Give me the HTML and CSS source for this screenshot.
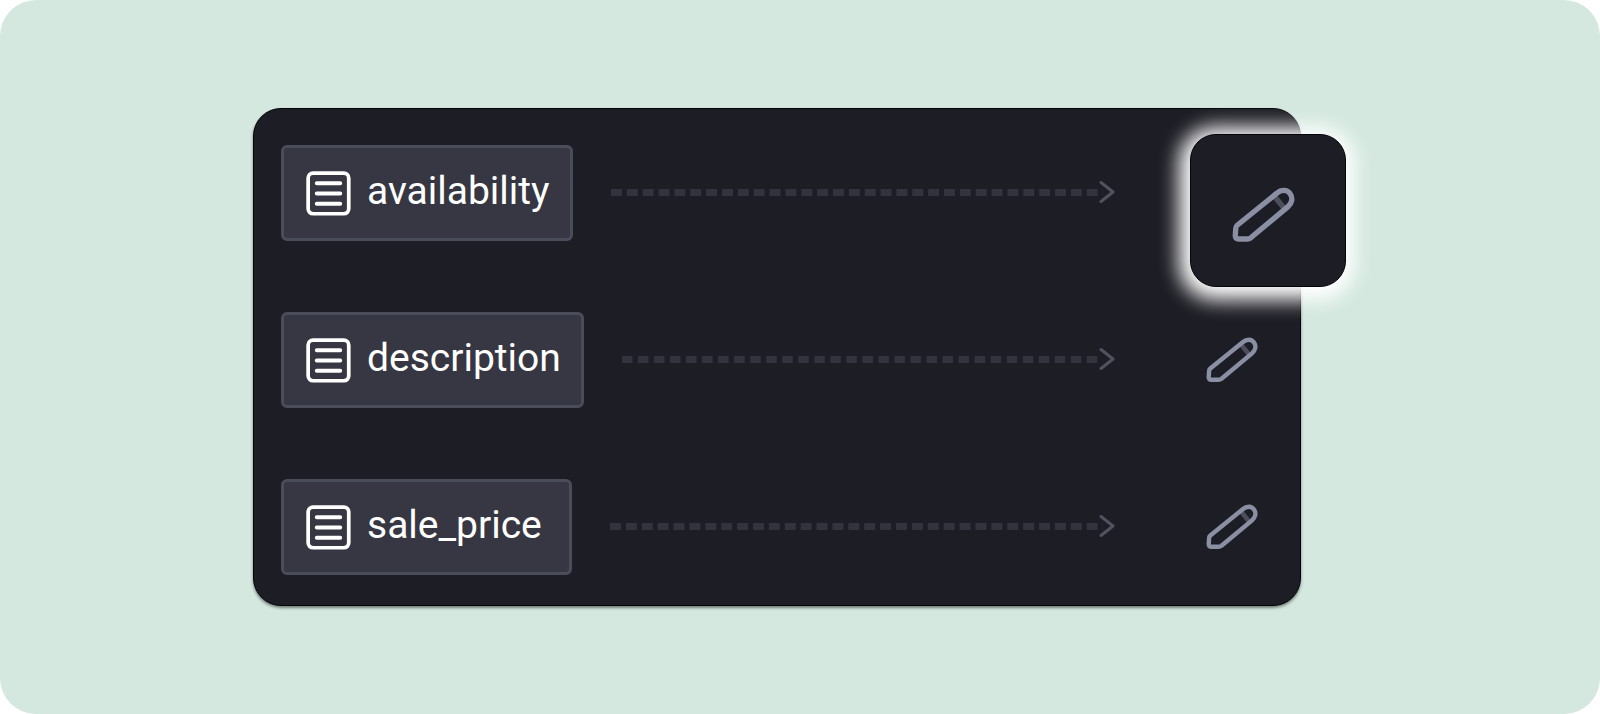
FILE: index.html
```html
<!DOCTYPE html>
<html lang="en">
<head>
    <meta charset="UTF-8">
    <meta name="viewport" content="width=device-width, initial-scale=1.0">
    <title>Field Mapping</title>
    <link rel="stylesheet" href="styles.css">
</head>
<body>
    <!-- Shared icons -->
    <svg class="sprite" aria-hidden="true">
        <symbol id="icon-field" viewBox="0 0 46 46">
            <rect x="2.200" y="2.200" width="41.500" height="41.500" rx="5" fill="none" stroke="#fff" stroke-width="3.800"/>
            <path d="M11 12.500h24M11 23h24M11 33.500h24" stroke="#fff" stroke-width="4" stroke-linecap="round"/>
        </symbol>
        <symbol id="icon-pencil" viewBox="0 0 52 46">
            <path d="M35 7.500l8.500 10.500" fill="none" stroke="#4c4e5b" stroke-width="4.500"/>
            <path d="M4.300 31.500L37 5C40.500 2 45.500 1.800 48 5.500C50.500 9.200 49.500 13.300 46 16.300L15.500 41.800Q14.200 42.800 12.500 42.800H5.500Q2.700 42.800 2.700 40L3.100 34Q3.200 32.400 4.300 31.500Z" fill="none" stroke="#8b8fa3" stroke-width="4.400" stroke-linejoin="round"/>
        </symbol>
        <symbol id="icon-arrow" viewBox="0 0 16 24">
            <path d="M2 2.500L14 12L2 21.500" fill="none" stroke="#51525e" stroke-width="3" stroke-linecap="round" stroke-linejoin="round"/>
        </symbol>
    </svg>

    <main class="stage">
        <div class="card">
            <div class="row">
                <div class="chip">
                    <svg class="field-icon" aria-hidden="true"><use href="#icon-field"/></svg>
                    <span>availability</span>
                </div>
                <div class="connector">
                    <div class="dashes"></div>
                    <svg class="arrow" aria-hidden="true"><use href="#icon-arrow"/></svg>
                </div>
                <div class="slot">
                    <button class="edit edit-active" aria-label="Edit availability">
                        <svg class="pencil" aria-hidden="true"><use href="#icon-pencil"/></svg>
                    </button>
                </div>
            </div>
            <div class="row">
                <div class="chip">
                    <svg class="field-icon" aria-hidden="true"><use href="#icon-field"/></svg>
                    <span>description</span>
                </div>
                <div class="connector">
                    <div class="dashes"></div>
                    <svg class="arrow" aria-hidden="true"><use href="#icon-arrow"/></svg>
                </div>
                <div class="slot">
                    <button class="edit" aria-label="Edit description">
                        <svg class="pencil" aria-hidden="true"><use href="#icon-pencil"/></svg>
                    </button>
                </div>
            </div>
            <div class="row">
                <div class="chip">
                    <svg class="field-icon" aria-hidden="true"><use href="#icon-field"/></svg>
                    <span>sale_price</span>
                </div>
                <div class="connector">
                    <div class="dashes"></div>
                    <svg class="arrow" aria-hidden="true"><use href="#icon-arrow"/></svg>
                </div>
                <div class="slot">
                    <button class="edit" aria-label="Edit sale_price">
                        <svg class="pencil" aria-hidden="true"><use href="#icon-pencil"/></svg>
                    </button>
                </div>
            </div>
        </div>
    </main>
</body>
</html>
```
FILE: styles.css
```css
* {
    box-sizing: border-box;
}

body {
    margin: 0;
    background-color: #fff;
    font-family: Roboto, "Liberation Sans", sans-serif;
}

.sprite {
    position: absolute;
    width: 0;
    height: 0;
}

.stage {
    min-height: 100vh;
    padding: 108px 299px 107px 253px;
    background-color: #d4e8df;
    border-radius: 36px;
}

.card {
    display: flex;
    flex-direction: column;
    gap: 71px;
    padding: 36px 42px 30px 27px;
    background-color: #1d1d25;
    border: 1px solid #050508;
    border-radius: 28px;
    box-shadow: 0 2px 3px rgba(0, 0, 0, 0.45);
}

.row {
    position: relative;
    display: flex;
    align-items: center;
}

.chip {
    display: flex;
    align-items: center;
    gap: 16px;
    min-width: 291px;
    height: 96px;
    padding: 0 20px 0 22px;
    background-color: #363742;
    border: 3px solid #4b4c5a;
    border-radius: 6px;
    color: #fff;
    font-size: 39px;
    font-weight: 400;
    line-height: 48px;
}

.chip span {
    padding-bottom: 4px;
}

.field-icon {
    width: 45px;
    height: 45px;
}

.connector {
    flex: 1;
    display: flex;
    align-items: center;
    margin: 0 91px 2px 38px;
}

/* "round" keeps whole dashes whatever the line length */
.dashes {
    flex: 1;
    height: 7px;
    background-image: linear-gradient(to right, #33333e 66%, transparent 66%);
    background-size: 16px 7px;
    background-repeat: round no-repeat;
}

.arrow {
    width: 16px;
    height: 24px;
    margin-left: -4px;
}

.slot {
    width: 52px;
    height: 46px;
}

.edit {
    display: flex;
    justify-content: center;
    align-items: center;
    padding: 0;
    background: none;
    border: none;
    cursor: pointer;
}

.pencil {
    width: 52px;
    height: 46px;
}

/* Highlighted button lies over the card edge */
.edit-active {
    position: absolute;
    top: -11px;
    right: -88px;
    width: 156px;
    height: 153px;
    padding-top: 8px;
    padding-right: 10px;
    background-color: #1d1d25;
    border: 1px solid #050508;
    border-radius: 26px;
    box-shadow: -1px 3px 20px 10px #fff;
}

.edit-active .pencil {
    width: 63px;
    height: 56px;
}
```
